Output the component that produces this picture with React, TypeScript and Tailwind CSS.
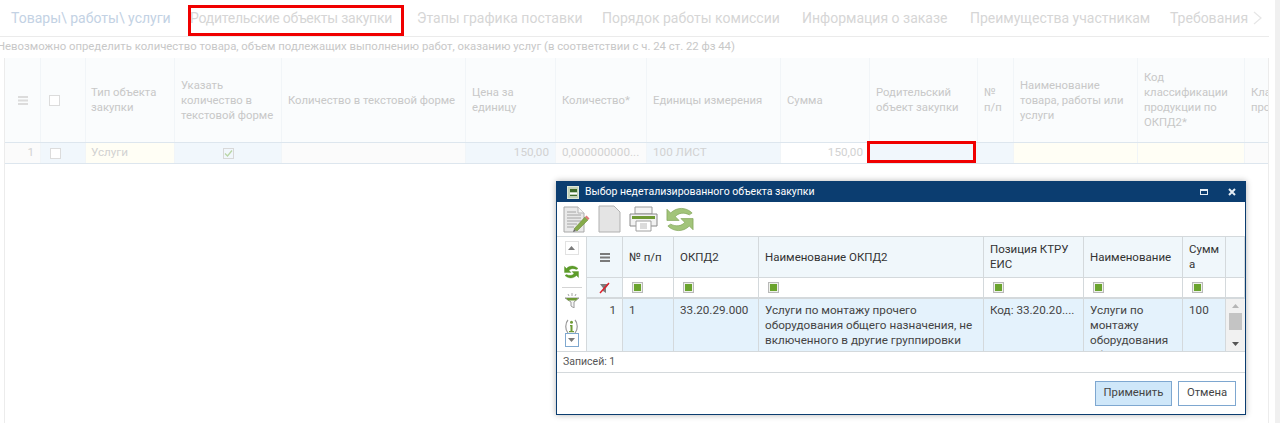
import type { ReactNode } from "react";

const MAIN_COLS =
  "grid-cols-[36px_45px_89px_107px_184px_90px_91px_134px_89px_108px_36px_124px_107px_120px]";
const DIALOG_COLS =
  "grid-cols-[36px_51px_85px_225px_100px_99px_43px_19px]";

const tabs = [
  { label: "Родительские объекты закупки", w: "w-[205px] tracking-[-0.25px]" },
  { label: "Этапы графика поставки", w: "w-[163px]" },
  { label: "Порядок работы комиссии", w: "w-[178px]" },
  { label: "Информация о заказе", w: "w-[146px]" },
  { label: "Преимущества участникам", w: "w-[178px]" },
  { label: "Требования", w: "w-[74px]" },
];

const headCell = "flex items-center border-r border-[#f1f5f8] px-[6px] text-[11.300px] leading-[15px] text-[#c8c8c8]";
const rowCell = "flex items-center border-r border-[#f1f5f8] px-[6px] text-[11.700px] text-[#d2d2d2] overflow-hidden whitespace-nowrap";

const MainHead = ({ children }: { children?: ReactNode }) => <div className={headCell}>{children}</div>;

const Box = () => <span className="block h-[11px] w-[11px] border border-[#dcdcdc] bg-white" />;

const Burger = ({ color }: { color: string }) => (
  <svg width="10" height="9" viewBox="0 0 10 9">
    <path d="M0 1h10M0 4.500h10M0 8h10" stroke={color} strokeWidth="2" />
  </svg>
);

const FilterMark = () => (
  <span className="flex h-[11px] w-[11px] items-center justify-center border border-[#b9b9b9] bg-[#eef1ea]">
    <span className="block h-[7px] w-[7px] bg-[#6aa32d]" />
  </span>
);

const DocEdit = () => (
  <svg width="27" height="27" viewBox="0 0 27 27">
    <path d="M1 1h14l6 6v19H1z" fill="#e9e9e9" stroke="#a9a9a9" />
    <path d="M15 1v6h6" fill="#f6f6f6" stroke="#b5b5b5" />
    <path d="M4 6h9M4 9h14M4 12h14M4 15h14M4 18h10M4 21h7" stroke="#a4a4a4" />
    <path d="M11 23l11-12 3 3-11 11z" fill="#86ab4a" stroke="#5e7f2c" strokeWidth="0.5" />
    <path d="M11 23l-1 3 3-1z" fill="#666" />
    <path d="M22 11l1.500-1.500 3 3L25 14z" fill="#e07a7a" />
  </svg>
);

const DocBlank = () => (
  <svg width="23" height="28" viewBox="0 0 23 28">
    <path d="M1 1h15l6 6v20H1z" fill="#e4e4e4" stroke="#b0b0b0" />
  </svg>
);

const Printer = () => (
  <svg width="29" height="26" viewBox="0 0 29 26">
    <path d="M6 1h17v7H6z" fill="#f4f4f4" stroke="#9c9c9c" />
    <path d="M1 8h27v12H1z" fill="#f2f2f2" stroke="#8a8a8a" />
    <path d="M3 10h23v3H3z" fill="#6f9a35" />
    <path d="M7 15h15v10H7z" fill="#fff" stroke="#a0a0a0" />
    <path d="M11 18h7M11 20h7M11 22h7" stroke="#b8b8b8" />
  </svg>
);

const Refresh = ({ w, h, color, dark }: { w: number; h: number; color: string; dark: string }) => (
  <svg width={w} height={h} viewBox="0 0 30 26">
    <path d="M1 2v12h13l-4-4C13 6 19 5 25 8l3-2C22 0 12-1 5 6z" fill={color} stroke={dark} strokeWidth="0.7" />
    <path d="M29 24V12H16l4 4c-3 4-9 5-15 2l-3 2c6 6 16 7 23 0z" fill={color} stroke={dark} strokeWidth="0.7" />
  </svg>
);

const Funnel = () => (
  <svg width="16" height="15" viewBox="0 0 16 15">
    <path d="M1 5h14l-5 4v6l-3-2V9z" fill="#f6f6f6" stroke="#9a9a9a" />
    <path d="M2 5h12l-2 2.500H4z" fill="#6f9a35" />
    <path d="M4 1l1 2M8 0v3M12 1l-1 2" stroke="#a5a5a5" />
  </svg>
);

const ClearFilter = () => (
  <svg width="11" height="12" viewBox="0 0 11 12">
    <path d="M1 2h9L7 6v5L4 9V6z" fill="#7c7c7c" />
    <path d="M1 11L10 1" stroke="#e0202a" strokeWidth="1.500" />
  </svg>
);

const Info = () => (
  <svg width="15" height="15" viewBox="0 0 15 15">
    <path d="M4 1C1 4 1 11 4 14M11 1C14 4 14 11 11 14" fill="none" stroke="#9a9a9a" strokeWidth="1.200" />
    <circle cx="7.500" cy="3.300" r="1.500" fill="#6f9a35" />
    <path d="M6 6h2.500v6H10v1.200H5V12h1.500V7.200H6z" fill="#6f9a35" />
  </svg>
);

const Caret = ({ up, color = "#7a7a7a" }: { up?: boolean; color?: string }) => (
  <svg width="7" height="4" viewBox="0 0 7 4">
    <path d={up ? "M0 4l3.500-4L7 4z" : "M0 0l3.500 4L7 0z"} fill={color} />
  </svg>
);

const Dialog = () => {
  const dh = "flex items-center border-r border-[#d4d9dc] px-[6px] bg-[#f0f7fb] text-[11.500px] leading-[15px] text-[#333] break-all";
  const df = "flex items-center border-r border-[#d4d9dc] pl-[9px] bg-white";
  const dc = "border-r border-[#d4d9dc] px-[6px] pt-[4px] bg-[#e4f2fc] text-[11.700px] leading-[15px] text-[#444] overflow-hidden";

  return (
    <div className="absolute left-[556px] top-[181px] flex h-[234px] w-[690px] flex-col border border-[#0b3d70] bg-white shadow-[0_0_6px_rgba(0,0,0,0.3)]">
      <div className="flex h-[20px] shrink-0 items-center bg-[#0b3d70] pl-[10px] pr-[9px] text-[10.500px] text-white">
        <span className="flex h-[13px] w-[12px] flex-col items-center justify-center gap-[1px] border border-[#dfe8d8] bg-[#c3d2b8]">
          <span className="block h-[3px] w-[7px] bg-[#3e6b2a]" />
          <span className="block h-[1px] w-[7px] bg-white" />
          <span className="block h-[1px] w-[7px] bg-[#3e6b2a]" />
        </span>
        <span className="ml-[6px] flex-1">Выбор недетализированного объекта закупки</span>
        <span className="mr-[20px] block h-[6px] w-[8px] border border-t-2 border-[#e4ecf4]" />
        <svg width="8" height="8" viewBox="0 0 8 8">
          <path d="M1 1l6 6M7 1l-6 6" stroke="#e4ecf4" strokeWidth="2" />
        </svg>
      </div>

      <div className="flex h-[35px] shrink-0 items-center gap-[8px] border-b border-[#d4d9dc] pl-[6px]">
        <DocEdit />
        <DocBlank />
        <Printer />
        <Refresh w={28} h={25} color="#a2c47a" dark="#7ca153" />
      </div>

      <div className="flex h-[115px] shrink-0 border-b border-[#d4d9dc]">
        <div className="flex w-[30px] shrink-0 flex-col items-center border-r border-[#d4d9dc] pt-[4px]">
          <span className="flex h-[14px] w-[14px] items-center justify-center border border-[#e2e2e2]">
            <Caret up />
          </span>
          <span className="mt-[10px]">
            <Refresh w={15} h={14} color="#5c9c28" dark="#4d8a1f" />
          </span>
          <span className="mt-[8px] block h-px w-[20px] bg-[#d4d4d4]" />
          <span className="mt-[5px] h-[15px]">
            <Funnel />
          </span>
          <span className="mt-[11px] h-[14px]">
            <Info />
          </span>
          <span className="flex h-[14px] w-[14px] items-center justify-center border border-[#7fa8cf] bg-white">
            <Caret />
          </span>
        </div>

        <div className="flex min-w-0 flex-1 flex-col">
          <div className={`grid h-[41px] shrink-0 border-b border-[#d4d9dc] ${DIALOG_COLS}`}>
            <div className={`${dh} justify-center`}>
              <Burger color="#7a7a7a" />
            </div>
            <div className={dh}>№ п/п</div>
            <div className={dh}>ОКПД2</div>
            <div className={dh}>Наименование ОКПД2</div>
            <div className={`${dh} break-normal`}>Позиция КТРУ ЕИС</div>
            <div className={dh}>Наименование</div>
            <div className={dh}>Сумма</div>
            <div className={dh} />
          </div>
          <div className={`grid h-[21px] shrink-0 border-b-2 border-[#d4d9dc] ${DIALOG_COLS}`}>
            <div className="flex items-center justify-center border-r border-[#d4d9dc] bg-[#f0f7fb]">
              <ClearFilter />
            </div>
            {[0, 1, 2, 3, 4, 5].map((i) => (
              <div key={i} className={df}>
                <FilterMark />
              </div>
            ))}
            <div className={df} />
          </div>
          <div className={`grid min-h-0 flex-1 ${DIALOG_COLS}`}>
            <div className={`${dc} bg-[#f0f7fb] text-right`}>1</div>
            <div className={dc}>1</div>
            <div className={dc}>33.20.29.000</div>
            <div className={dc}>Услуги по монтажу прочего оборудования общего назначения, не включенного в другие группировки</div>
            <div className={`${dc} whitespace-nowrap`}>Код: 33.20.20....</div>
            <div className={dc}>Услуги по монтажу оборудования общего</div>
            <div className={dc}>100</div>
            <div className="flex flex-col items-center bg-[#f1f1f1] py-[5px]">
              <Caret up color="#b5b5b5" />
              <span className="mt-[5px] block h-[17px] w-[13px] bg-[#c4c4c4]" />
              <span className="mt-auto">
                <Caret color="#555" />
              </span>
            </div>
          </div>
        </div>
      </div>

      <div className="flex h-[21px] shrink-0 items-center border-b border-[#d4d9dc] pl-[6px] text-[10.500px] text-[#555]">Записей: 1</div>

      <div className="flex flex-1 items-center justify-end gap-[6px] pr-[9px]">
        <button className="h-[25px] w-[77px] border border-[#7ea7d0] bg-[#cfe7f9] text-[11.300px] text-[#444]">Применить</button>
        <button className="h-[25px] w-[58px] border border-[#7ea7d0] bg-white text-[11.300px] text-[#444]">Отмена</button>
      </div>
    </div>
  );
};

export default function App() {
  return (
    <div className="relative h-[423px] w-[1280px] overflow-hidden bg-white font-['Roboto',sans-serif]">
      <div className="mr-[11px] flex h-[37px] items-center whitespace-nowrap border-b border-[#ebebeb] pl-[11px] text-[14px]">
        <span className="mr-[22px] w-[157px] text-[#c3d2e4]">Товары\ работы\ услуги</span>
        <div className="flex gap-[22px] text-[#d6d6d6]">
          {tabs.map((t) => (
            <span key={t.label} className={t.w}>
              {t.label}
            </span>
          ))}
        </div>
        <svg width="9" height="14" viewBox="0 0 9 14" className="ml-[9px]">
          <path d="M1 1l7 6-7 6" fill="none" stroke="#e6e6e6" strokeWidth="1.200" />
        </svg>
      </div>

      <div className="ml-[-3px] flex h-[21px] items-center whitespace-nowrap pb-[2px] text-[11.330px] text-[#c8c8c8]">
        Невозможно определить количество товара, объем подлежащих выполнению работ, оказанию услуг (в соответствии с ч. 24 ст. 22 фз 44)
      </div>

      <div className="ml-[4px] h-[365px] w-[1265px] overflow-hidden border-x border-[#ececec]">
        <div className={`grid h-[84px] w-max bg-[#fafcfd] ${MAIN_COLS}`}>
          <div className={`${headCell} justify-center`}>
            <Burger color="#dcdcdc" />
          </div>
          <div className={`${headCell} pl-[8px]`}>
            <Box />
          </div>
          <div className={`${headCell} pl-[5px]`}>Тип объекта закупки</div>
          <MainHead>Указать количество в текстовой форме</MainHead>
          <MainHead>Количество в текстовой форме</MainHead>
          <MainHead>Цена за единицу</MainHead>
          <MainHead>Количество*</MainHead>
          <MainHead>Единицы измерения</MainHead>
          <MainHead>Сумма</MainHead>
          <MainHead>Родительский объект закупки</MainHead>
          <MainHead>№ п/п</MainHead>
          <MainHead>Наименование товара, работы или услуги</MainHead>
          <MainHead>Код классификации продукции по ОКПД2*</MainHead>
          <MainHead>Классификация продукции</MainHead>
        </div>
        <div className={`grid h-[22px] w-max border-y border-[#dde6ee] ${MAIN_COLS}`}>
          <div className={`${rowCell} justify-end bg-[#fbfbfb]`}>1</div>
          <div className={`${rowCell} bg-[#f1f7fc] pl-[9px]`}>
            <Box />
          </div>
          <div className={`${rowCell} bg-[#fffef5] pl-[5px]`}>Услуги</div>
          <div className={`${rowCell} justify-center bg-[#f1f7fc]`}>
            <span className="flex h-[11px] w-[11px] items-center justify-center border border-[#d8d8d8]">
              <svg width="9" height="9" viewBox="0 0 9 9">
                <path d="M1 4.500l2.500 2.500L8 1.500" fill="none" stroke="#b9d6a6" strokeWidth="1.300" />
              </svg>
            </span>
          </div>
          <div className={`${rowCell} bg-[#fbfbfb]`} />
          <div className={`${rowCell} justify-end bg-[#f1f7fc] text-[#c4dcc4]`}>150,00</div>
          <div className={`${rowCell} bg-[#fbfbfb]`}>0,000000000...</div>
          <div className={`${rowCell} bg-[#f1f7fc]`}>100 ЛИСТ</div>
          <div className={`${rowCell} justify-end bg-white text-[#c4dcc4]`}>150,00</div>
          <div className={`${rowCell} bg-[#f1f7fc]`} />
          <div className={`${rowCell} bg-[#f1f7fc]`} />
          <div className={`${rowCell} bg-[#fffef5]`} />
          <div className={`${rowCell} bg-[#fffef5]`} />
          <div className={`${rowCell} bg-[#fbfbfb]`} />
        </div>
      </div>

      <div className="absolute right-0 top-0 h-full w-[5px] bg-[#f0f0f0]" />

      <div className="absolute left-[188px] top-[5px] h-[31px] w-[216px] border-[3px] border-[#f00000]" />
      <div className="absolute left-[867px] top-[141px] h-[22px] w-[109px] border-[3px] border-[#f00000]" />

      <Dialog />
    </div>
  );
}
